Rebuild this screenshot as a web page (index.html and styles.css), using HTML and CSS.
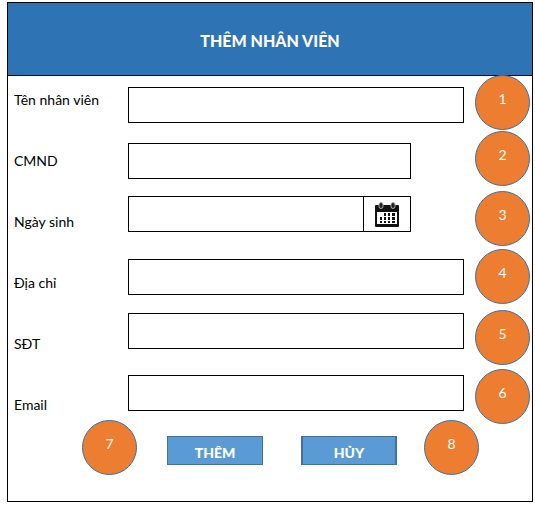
FILE: index.html
```html
<!DOCTYPE html>
<html lang="vi">
<head>
<meta charset="utf-8">
<meta name="viewport" content="width=device-width, initial-scale=1">
<title>Thêm nhân viên</title>
<link rel="stylesheet" href="styles.css">
</head>
<body>
<main class="panel">
  <header class="panel-header"><h1>THÊM NHÂN VIÊN</h1></header>
  <form>
    <div class="form-body">
      <div class="labels">
        <label for="name">Tên nhân viên</label>
        <label for="idcard">CMND</label>
        <label for="birthday">Ngày sinh</label>
        <label for="address">Địa chỉ</label>
        <label for="phone">SĐT</label>
        <label for="email">Email</label>
      </div>
      <div class="fields">
        <input class="field" id="name" type="text">
        <input class="field field-short" id="idcard" type="text">
        <div class="field field-short date-field">
          <input id="birthday" type="text">
          <button type="button" class="date-button" aria-label="Chọn ngày">
            <svg viewBox="0 0 24 25" width="24" height="25" aria-hidden="true">
              <path fill="#111" fill-rule="evenodd" d="M1 3h22a1 1 0 0 1 1 1v20a1 1 0 0 1-1 1H1a1 1 0 0 1-1-1V4a1 1 0 0 1 1-1zM2 10v12h20V10z"/>
              <rect x="4" y="0.500" width="4" height="6" rx="2" fill="#222" stroke="#aaa"/>
              <rect x="16" y="0.500" width="4" height="6" rx="2" fill="#222" stroke="#aaa"/>
              <path fill="#111" d="M9 11h2v3H9zM13 11h2v3h-2zM17 11h3v3h-3zM5 15h2v3H5zM9 15h2v3H9zM13 15h2v3h-2zM17 15h3v3h-3zM5 19h2v2H5zM9 19h2v2H9zM13 19h2v2h-2zM17 19h3v2h-3z"/>
            </svg>
          </button>
        </div>
        <input class="field" id="address" type="text">
        <input class="field" id="phone" type="tel">
        <input class="field" id="email" type="email">
      </div>
      <div class="badges">
        <span class="badge">1</span>
        <span class="badge">2</span>
        <span class="badge">3</span>
        <span class="badge">4</span>
        <span class="badge">5</span>
        <span class="badge">6</span>
      </div>
    </div>
    <div class="actions">
      <span class="badge">7</span>
      <button class="action" type="submit">THÊM</button>
      <button class="action action-cancel" type="button">HỦY</button>
      <span class="badge">8</span>
    </div>
  </form>
</main>
</body>
</html>
```
FILE: styles.css
```css
* {
  box-sizing: border-box;
}

body {
  margin: 2px 2px 3px 7px;
  background: #fff;
  color: #000;
  font-family: Lato, "Noto Sans", sans-serif;
  font-size: 14px;
  line-height: 20px;
}

.panel {
  border: 1px solid #000;
}

.panel-header {
  display: flex;
  align-items: center;
  justify-content: center;
  padding: 26px 0;
  border-bottom: 1px solid #000;
  background: #2e74b5;
  color: #fff;
}

h1 {
  margin: 0;
  padding-top: 4px;
  font-size: 16px;
  line-height: 16px;
  font-weight: 900;
}

.form-body {
  display: grid;
  grid-template-columns: 120px 1fr 55px;
  padding-right: 2px;
}

.labels {
  display: grid;
  grid-auto-rows: 61px;
  align-content: start;
  height: 344px;
  padding: 14px 0 0 6px;
}

.fields {
  display: grid;
  grid-template-rows: 56px 53px 63px 54px 62px 36px;
  align-content: start;
  align-items: start;
  padding-top: 11px;
}

.field {
  width: calc(100% - 11px);
  height: 36px;
  margin: 0;
  padding: 0 8px;
  border: 1px solid #000;
  border-radius: 0;
  background: #fff;
  font: inherit;
}

.field-short {
  width: calc(100% - 64px);
}

.date-field {
  display: flex;
  padding: 0;
}

.date-field input {
  flex: 1;
  min-width: 0;
  padding: 0 8px;
  border: 0;
  background: transparent;
  font: inherit;
}

.date-button {
  display: flex;
  align-items: center;
  justify-content: center;
  width: 47px;
  padding: 0;
  border: 0;
  border-left: 1px solid #000;
  background: #fff;
}

.badges {
  display: grid;
  grid-template-rows: 56px 60px 58px 61px 59px 55px;
  align-content: start;
  margin-top: -1px;
}

.badge {
  display: flex;
  align-items: center;
  justify-content: center;
  width: 55px;
  height: 55px;
  padding-bottom: 8px;
  border: 1px solid #41719c;
  border-radius: 50%;
  background: #ed7d31;
  color: #fff;
}

.actions {
  display: grid;
  grid-template-columns: 85px 134px 123px 55px;
  align-items: center;
  justify-items: start;
  margin-top: -4px;
  padding: 0 0 26px 74px;
}

.action {
  width: 96px;
  height: 29px;
  margin-top: 6px;
  padding: 4px 0 0;
  border: 1px solid #41719c;
  border-radius: 0;
  background: #5b9bd5;
  color: #fff;
  font: 900 14px/20px Lato, "Noto Sans", sans-serif;
}

.action-cancel {
  border-width: 1px 2px;
}
```
